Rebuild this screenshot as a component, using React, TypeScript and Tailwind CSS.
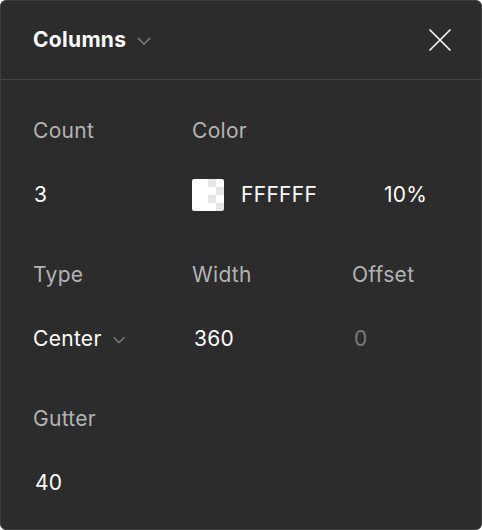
import type { ReactNode } from 'react';

const Chevron = ({ className = '' }: { className?: string }) => (
  <svg width="14" height="8" viewBox="0 0 14 8" fill="none" className={className}>
    <path d="M1 1l6 6 6-6" stroke="currentColor" strokeWidth="1.5" />
  </svg>
);

const Swatch = () => (
  <div className="flex h-8 w-8 overflow-hidden rounded-[2px]">
    <div className="h-full w-4 bg-white" />
    <div className="grid h-full w-4 grid-cols-2 grid-rows-4">
      <div className="bg-[#e6e6e6]" />
      <div className="bg-white" />
      <div className="bg-white" />
      <div className="bg-[#e6e6e6]" />
      <div className="bg-[#e6e6e6]" />
      <div className="bg-white" />
      <div className="bg-white" />
      <div className="bg-[#e6e6e6]" />
    </div>
  </div>
);

const Label = ({ children }: { children: ReactNode }) => (
  <div className="flex h-8 items-center text-[21px] tracking-[0.3px] text-[#b3b3b3]">{children}</div>
);

const Value = ({ children, muted }: { children: ReactNode; muted?: boolean }) => (
  <div
    className={`flex h-8 items-center text-[21px] tracking-[0.3px] ${muted ? 'text-[#7a7a7a]' : 'text-white'}`}
  >
    {children}
  </div>
);

export default function App() {
  return (
    <div
      className="h-[530px] w-[482px] overflow-hidden rounded-[6px] border border-[#3d3d3d] bg-[#2c2c2c]"
      style={{ fontFamily: 'Inter, "Noto Sans", sans-serif' }}
    >
      <div className="flex h-[79px] items-center justify-between border-b border-[#444444] pl-8 pr-[29px]">
        <div className="flex items-center gap-[11px]">
          <span className="text-[21px] font-bold tracking-[0.3px] text-white">Columns</span>
          <Chevron className="mt-[2px] text-[#808080]" />
        </div>
        <svg width="24" height="24" viewBox="0 0 24 24" fill="none" className="text-white">
          <path d="M1.5 1.5l21 21M22.5 1.5l-21 21" stroke="currentColor" strokeWidth="1.6" />
        </svg>
      </div>

      <div className="flex flex-col gap-12 px-8 pt-[35px]">
        <div className="grid grid-cols-[159px_1fr] gap-y-8">
          <Label>Count</Label>
          <Label>Color</Label>
          <Value>
            <span className="pl-px">3</span>
          </Value>
          <div className="flex h-8 items-center">
            <Swatch />
            <span className="ml-[17px] w-[143px] text-[21px] tracking-[0.3px] text-white">FFFFFF</span>
            <span className="text-[21px] tracking-[0.2px] text-white">10%</span>
          </div>
        </div>

        <div className="grid grid-cols-[159px_160px_1fr] gap-y-8">
          <Label>Type</Label>
          <Label>Width</Label>
          <Label>Offset</Label>
          <Value>
            <span>Center</span>
            <Chevron className="ml-[10px] mt-[2px] scale-90 text-[#808080]" />
          </Value>
          <Value>
            <span className="pl-[2px]">360</span>
          </Value>
          <Value muted>
            <span className="pl-[2px]">0</span>
          </Value>
        </div>

        <div className="grid grid-cols-[159px_1fr] gap-y-8">
          <Label>Gutter</Label>
          <div />
          <Value>
            <span className="pl-[2px]">40</span>
          </Value>
        </div>
      </div>
    </div>
  );
}
